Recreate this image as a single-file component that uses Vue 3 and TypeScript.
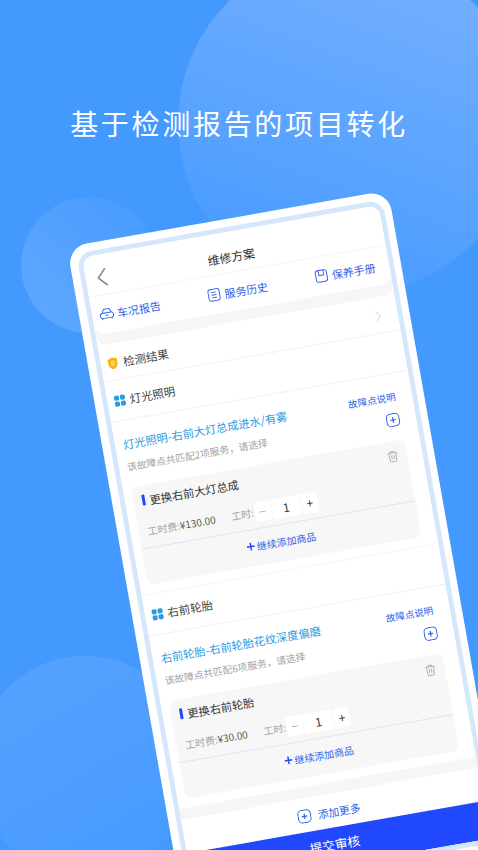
<script setup lang="ts">
interface Section {
  name: string
  title: string
  hint: string
  service: string
  fee: string
}

const tabs = ['车况报告', '服务历史', '保养手册']

const sections: Section[] = [
  {
    name: '灯光照明',
    title: '灯光照明-右前大灯总成进水/有雾',
    hint: '该故障点共匹配2项服务，请选择',
    service: '更换右前大灯总成',
    fee: '¥130.00',
  },
  {
    name: '右前轮胎',
    title: '右前轮胎-右前轮胎花纹深度偏磨',
    hint: '该故障点共匹配6项服务，请选择',
    service: '更换右前轮胎',
    fee: '¥30.00',
  },
]
</script>

<template>
  <div class="page">
    <span class="blob blob-large"></span>
    <span class="blob blob-small"></span>
    <span class="blob blob-bottom"></span>

    <h1 class="headline">基于检测报告的项目转化</h1>

    <div class="phone">
      <div class="ring">
        <div class="screen">
          <header class="nav">
            <svg class="back" viewBox="0 0 12 20" fill="none">
              <path d="M10.5 1.5 2.5 10l8 8.500" stroke="#8a8a8a" stroke-width="1.6" />
            </svg>
            <span class="nav-title">维修方案</span>
          </header>

          <nav class="tabs">
            <div v-for="(tab, i) in tabs" :key="tab" class="tab">
              <svg class="tab-icon" viewBox="0 0 16 16" fill="none" stroke="#2f5fe8" stroke-width="1">
                <template v-if="i === 0">
                  <path d="M3.4 7.2 4.600 4c.2-.6.7-1 1.400-1h4.500c.7 0 1.200.4 1.400 1l1.200 3.200" />
                  <rect x="1" y="7" width="14" height="5.600" rx="2.200" />
                  <path d="M3 12.600v1.600M13 12.600v1.600M6.600 9.800h3" />
                </template>
                <template v-else-if="i === 1">
                  <rect x="2" y="2" width="12" height="12.500" rx="2.600" />
                  <path d="M5.400 5.400h5.200M5.400 8.200h5.200M5.400 11h5.200" />
                </template>
                <template v-else>
                  <rect x="2" y="2" width="12" height="12.500" rx="2.600" />
                  <path d="M5.400 2v5.400h5.200V2" />
                </template>
              </svg>
              <span>{{ tab }}</span>
            </div>
          </nav>

          <div class="result">
            <svg class="shield" viewBox="0 0 12 14">
              <path d="M6 .6 11 2.400v5c0 3-2.200 5-5 6.200C3.200 12.400 1 10.400 1 7.400v-5z" fill="#f7b316" />
              <path d="M4 5h4M4 7h4M4 9h4" stroke="#fff" stroke-width=".8" />
            </svg>
            <span class="result-label">检测结果</span>
            <svg class="result-arrow" viewBox="0 0 8 14" fill="none">
              <path d="m1.500 1.500 5 5.500-5 5.500" stroke="#d6d6d6" stroke-width="1.100" />
            </svg>
          </div>

          <section v-for="item in sections" :key="item.name" class="section">
            <div class="section-head">
              <span class="dots"><i></i><i></i><i></i><i></i></span>
              <span>{{ item.name }}</span>
            </div>

            <div class="fault">
              <div class="fault-text">
                <div class="fault-title">{{ item.title }}</div>
                <div class="fault-hint">{{ item.hint }}</div>
              </div>
              <div class="fault-side">
                <span class="fault-link">故障点说明</span>
                <svg class="plus-box" viewBox="0 0 14 14" fill="none" stroke="#2f5fe8">
                  <rect x=".7" y=".7" width="12.600" height="12.600" rx="4" stroke-width="1" />
                  <path d="M4.200 7h5.600M7 4.200v5.600" stroke-width="1.200" />
                </svg>
              </div>
            </div>

            <div class="card">
              <div class="card-head">
                <span class="bar"></span>
                <span class="service">{{ item.service }}</span>
                <svg class="trash" viewBox="0 0 12 13" fill="none" stroke="#a8a8a8" stroke-width=".9">
                  <path d="M.8 2.600h10.400M4 2.400V1h4v1.400M2 2.600l.5 8.200c0 .8.500 1.300 1.200 1.300h4.600c.7 0 1.200-.5 1.200-1.300l.5-8.200" />
                  <path d="M4.800 5v4.600M7.200 5v4.600" />
                </svg>
              </div>
              <div class="card-row">
                <span class="fee"><em>工时费:</em>{{ item.fee }}</span>
                <span class="hours"><em>工时:</em></span>
                <div class="stepper">
                  <span class="step step-side minus">−</span>
                  <span class="step step-mid">1</span>
                  <span class="step step-side">+</span>
                </div>
              </div>
              <div class="card-add">
                <svg class="add-cross" viewBox="0 0 9 9" stroke="#1f48ff" stroke-width="1.700">
                  <path d="M0 4.500h9M4.500 0v9" />
                </svg>
                <span>继续添加商品</span>
              </div>
            </div>
          </section>

          <div class="band"></div>

          <div class="more">
            <svg class="plus-box" viewBox="0 0 14 14" fill="none" stroke="#2f5fe8">
              <rect x=".7" y=".7" width="12.600" height="12.600" rx="4" stroke-width="1" />
              <path d="M4.200 7h5.600M7 4.200v5.600" stroke-width="1.200" />
            </svg>
            <span>添加更多</span>
          </div>

          <button class="submit" type="button">提交审核</button>
        </div>
      </div>
    </div>
  </div>
</template>

<style scoped>
.page {
  position: relative;
  width: 478px;
  height: 850px;
  overflow: hidden;
  background: #4499ff;
  font-family: "Noto Sans CJK SC", "Noto Sans", sans-serif;
}

.blob {
  position: absolute;
  border-radius: 50%;
}

.blob-large {
  left: 178px;
  top: -49px;
  width: 344px;
  height: 344px;
  background: linear-gradient(200deg, #79b2ff 0%, #66a9ff 35%, #4a9cff 85%);
}

.blob-small {
  left: 21px;
  top: 197px;
  width: 136px;
  height: 136px;
  background: linear-gradient(225deg, #4a9cff 15%, #5ea7fe 90%);
}

.blob-bottom {
  left: -25px;
  top: 656px;
  width: 220px;
  height: 220px;
  background: linear-gradient(150deg, #55a2fe 10%, #469aff 90%);
}

.headline {
  position: relative;
  margin: 0;
  padding-top: 102px;
  font-size: 28px;
  line-height: 42px;
  font-weight: 400;
  letter-spacing: 2.7px;
  color: #fff;
  text-align: center;
}

.phone {
  position: absolute;
  left: 67px;
  top: 247px;
  width: 326px;
  height: 668px;
  padding: 7.500px;
  box-sizing: border-box;
  background: #fff;
  border-radius: 20px;
  transform: rotate(-10deg);
  transform-origin: 0 0;
}

.ring {
  height: 100%;
  box-sizing: border-box;
  border: 5px solid #d5e8fb;
  border-radius: 15px;
}

.screen {
  display: flex;
  flex-direction: column;
  height: 100%;
  overflow: hidden;
  background: #fff;
  border-radius: 11px;
  color: #333;
}

.nav {
  position: relative;
  display: flex;
  justify-content: center;
  align-items: center;
  flex: none;
  height: 41px;
  padding: 10px 6px 0 0;
  box-sizing: border-box;
  border-bottom: 1px solid #f3f3f3;
}

.nav-title {
  font-size: 12px;
  line-height: 16px;
}

.back {
  position: absolute;
  left: 10px;
  top: 13px;
  width: 12px;
  height: 20px;
}

.tabs {
  display: grid;
  grid-template-columns: repeat(3, 94px);
  justify-content: center;
  column-gap: 15px;
  flex: none;
  height: 38px;
  padding-right: 6px;
  box-sizing: border-box;
  align-items: center;
  background: #fff;
  border-radius: 0 0 10px 10px;
  box-shadow: 0 11px 0 #f6f6f6;
  position: relative;
}

.tab {
  display: flex;
  justify-content: center;
  align-items: center;
  gap: 3px;
  font-size: 11px;
  line-height: 16px;
  color: #2f5fe8;
}

.tab-icon {
  width: 15px;
  height: 15px;
  flex: none;
}

.result {
  display: flex;
  align-items: center;
  flex: none;
  height: 37px;
  margin-top: 11px;
  padding: 3px 16px 0 6px;
  border-bottom: 1px solid #f1f1f1;
  box-sizing: border-box;
}

.shield {
  width: 12px;
  height: 13px;
  margin-right: 5px;
  flex: none;
}

.result-label {
  font-size: 11.500px;
  line-height: 16px;
  color: #444;
}

.result-arrow {
  width: 7px;
  height: 12px;
  margin-left: auto;
}

.section {
  flex: none;
  height: 217px;
  box-sizing: border-box;
  border-bottom: 1px solid #f5f5f5;
}

.section-head {
  display: flex;
  align-items: center;
  gap: 5px;
  height: 41px;
  padding-left: 7px;
  box-sizing: border-box;
  border-bottom: 1px solid #f1f1f1;
  font-size: 11.500px;
  color: #444;
}

.dots {
  display: grid;
  grid-template-columns: repeat(2, 5px);
  gap: 1px;
  margin-top: 2px;
}

.dots i {
  width: 5px;
  height: 5px;
  border-radius: 1.600px;
  background: #2a9ce2;
}

.fault {
  display: flex;
  justify-content: space-between;
  height: 67px;
  padding: 14px 16px 0 8.500px;
  box-sizing: border-box;
}

.fault-title {
  font-size: 11.300px;
  line-height: 18px;
  color: #2a9ce2;
  white-space: nowrap;
}

.fault-hint {
  margin-top: 7px;
  font-size: 9.800px;
  line-height: 15px;
  color: #a3a3a3;
  white-space: nowrap;
}

.fault-side {
  display: flex;
  flex-direction: column;
  align-items: flex-end;
  gap: 7px;
}

.fault-link {
  font-size: 9.600px;
  line-height: 18px;
  color: #2f5fe8;
  white-space: nowrap;
}

.plus-box {
  display: block;
  width: 14px;
  height: 14px;
  flex: none;
}

.card {
  width: 278px;
  height: 99px;
  margin-left: 8.500px;
  background: #f7f7f7;
  border-radius: 6px;
}

.card-head {
  display: flex;
  align-items: center;
  height: 30px;
  padding: 0 9px 0 8.500px;
  box-sizing: border-box;
}

.bar {
  width: 3px;
  height: 11px;
  background: #1f48ff;
  border-radius: 1px;
  flex: none;
}

.service {
  margin-left: 5px;
  padding-bottom: 0;
  font-size: 11.300px;
  line-height: 16px;
  color: #333;
}

.trash {
  width: 11px;
  height: 12px;
  margin-left: auto;
}

.card-row {
  display: flex;
  align-items: center;
  height: 33px;
  padding-left: 9px;
  box-sizing: border-box;
  border-bottom: 1px solid #dde6f0;
  font-size: 10px;
  color: #555;
  white-space: nowrap;
}

.card-row em {
  font-style: normal;
  color: #a3a3a3;
}

.hours {
  margin-left: 16px;
}

.stepper {
  display: flex;
  gap: 1px;
  margin-left: 1px;
}

.step {
  display: flex;
  justify-content: center;
  align-items: center;
  height: 20px;
  background: #fff;
  border-radius: 2px;
  font-size: 12px;
  color: #333;
}

.step-side {
  width: 16px;
}

.step-mid {
  width: 30px;
}

.minus {
  color: #aaa;
}

.card-add {
  display: flex;
  justify-content: center;
  align-items: center;
  gap: 2px;
  height: 36px;
  padding-bottom: 3px;
  box-sizing: border-box;
  font-size: 10px;
  color: #2f5fe8;
}

.add-cross {
  width: 8px;
  height: 8px;
}

.band {
  flex: none;
  height: 10px;
  background: #f6f6f6;
}

.more {
  display: flex;
  justify-content: center;
  align-items: center;
  gap: 6px;
  flex: none;
  height: 34px;
  padding: 3px 6px 0 0;
  box-sizing: border-box;
  font-size: 10.800px;
  color: #2f5fe8;
}

.submit {
  flex: 1;
  border: 0;
  padding: 0 6px 3px 0;
  background: #1f48ff;
  color: #fff;
  font: inherit;
  font-size: 12.700px;
  line-height: 18px;
}
</style>

<style>
html,
body {
  margin: 0;
  overflow: hidden;
}
</style>
